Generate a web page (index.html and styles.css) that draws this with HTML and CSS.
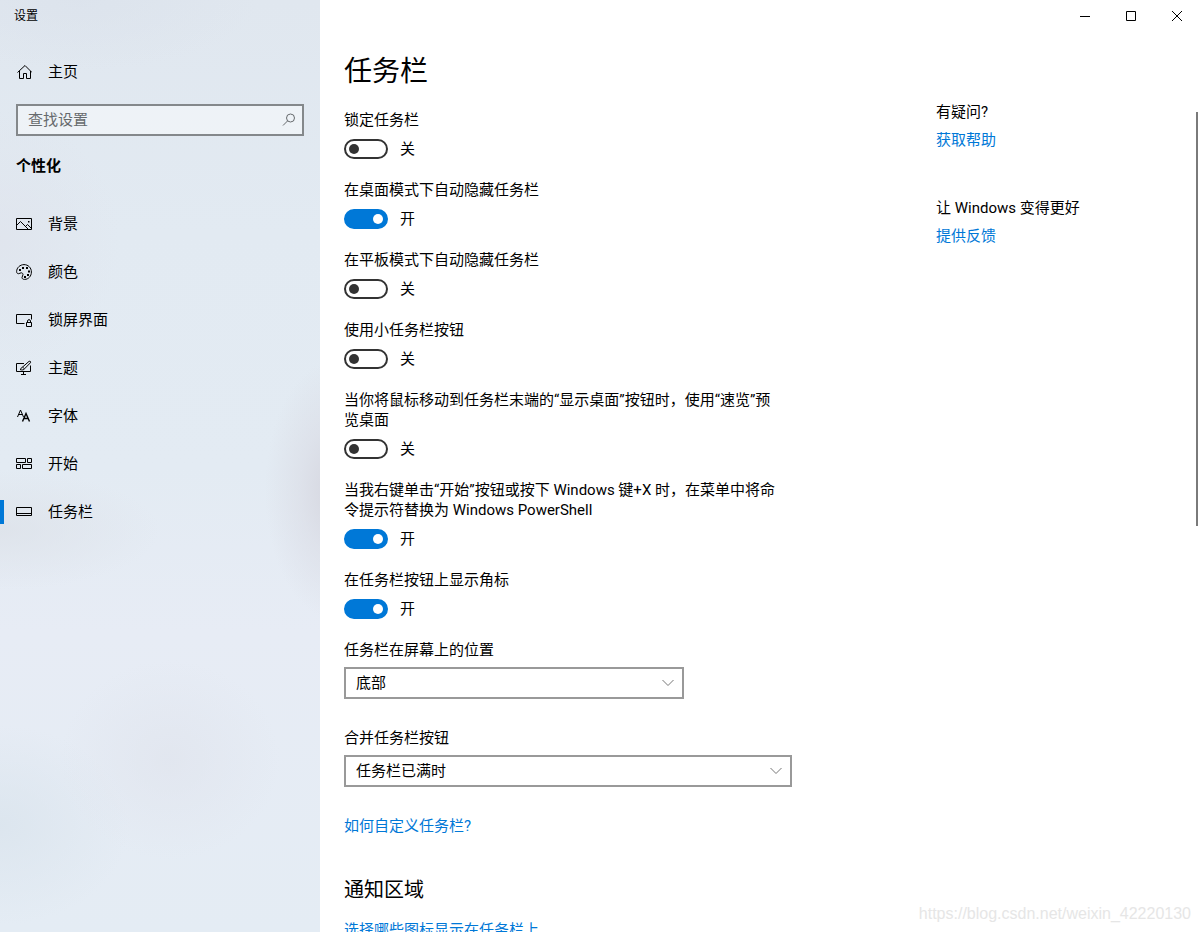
FILE: index.html
```html
<!DOCTYPE html>
<html lang="zh-CN">
<head>
<meta charset="utf-8">
<meta name="viewport" content="width=device-width, initial-scale=1">
<title>设置</title>
<link rel="stylesheet" href="styles.css">
</head>
<body>
<div class="window">
  <div class="sidebar">
    <div class="app-title">设置</div>
    <a class="nav-item home" href="#">
      <svg class="icon" viewBox="0 0 16 16"><path d="M1.500 8.500 9 1.500 16 8.500M3.500 7V14.500H7.500V9.500H10.500V14.500H14.500V7"/></svg>
      <span>主页</span>
    </a>
    <div class="search">
      <input class="search-input" type="text" placeholder="查找设置" aria-label="查找设置">
      <svg class="search-icon" viewBox="0 0 14 14"><circle cx="8.500" cy="5" r="4"/><path d="M5.700 7.800 1 12.500"/></svg>
    </div>
    <h2 class="group-title">个性化</h2>
    <nav class="nav">
      <a class="nav-item" href="#">
        <svg class="icon" viewBox="0 0 16 16"><path d="M.5 2.500H15.500V13.500H.5ZM.5 9.500 4.500 5.500 12 13M9.500 10.500 11.500 8.500 15.500 12.500"/><path class="solid" d="M12 5h1.500v1.500h-1.500z"/></svg>
        <span>背景</span>
      </a>
      <a class="nav-item" href="#">
        <svg class="icon" viewBox="0 0 16 16"><path d="M8 .6C12.200 .6 15.400 3.800 15.400 8C15.400 12.200 12.400 15.400 8.600 15.400C6.800 15.400 6 14.600 6 13.500C6 12.300 7 11.700 7 10.600C7 9.400 6.100 8.800 5.200 8.800C4.200 8.800 3.700 9.700 2.600 9.700C1.300 9.700 .6 8.900 .6 7.600C.6 3.800 4 .6 8 .6Z"/><path class="solid" d="M3 5h2v2H3zM6 3h2v2H6zM10 3h2v2h-2zM12 6.500h2v2h-2zM11 10h2v2h-2zM8 12h2v2H8z"/></svg>
        <span>颜色</span>
      </a>
      <a class="nav-item" href="#">
        <svg class="icon" viewBox="0 0 16 16"><path d="M8.500 11.500H.5V2.500H15.500V7.500M10.500 10.500H15.500V14.500H10.500ZM11.500 10.500V9C11.500 7.200 14.500 7.200 14.500 9V10.500"/></svg>
        <span>锁屏界面</span>
      </a>
      <a class="nav-item" href="#">
        <svg class="icon" viewBox="0 0 16 16"><path d="M8 3.500H.5V11.500H14.500V5.500M7.500 11.500V14M5 14.500H10M4 9.500C5.400 9.400 4.800 7.400 6.500 7.100L13 1.400C14.300 .8 15.100 1.700 14.400 2.800L8.500 8.800C8 10 6 10.300 4 9.500M6.500 7.100 8.500 8.800"/></svg>
        <span>主题</span>
      </a>
      <a class="nav-item" href="#">
        <svg class="icon" viewBox="0 0 16 16"><path d="M1.500 9 4.500 2 7.500 9M2.500 6.500H6.500"/><path class="heavy" d="M6.500 13.500 10 5.500 13.500 13.500M7.700 10.500H12.300"/></svg>
        <span>字体</span>
      </a>
      <a class="nav-item" href="#">
        <svg class="icon" viewBox="0 0 16 16"><path d="M.5 2.500H9.500V6.500H.5ZM11.500 2.500H15.500V6.500H11.500ZM.5 8.500H4.500V12.500H.5ZM6.500 8.500H15.500V12.500H6.500Z"/></svg>
        <span>开始</span>
      </a>
      <a class="nav-item current" href="#" aria-current="page">
        <svg class="icon" viewBox="0 0 16 16"><path d="M.5 3.500H15.500V11.500H.5ZM.5 9.500H15.500"/></svg>
        <span>任务栏</span>
      </a>
    </nav>
  </div>

  <div class="page">
    <div class="caption">
      <button class="caption-button" type="button" aria-label="最小化"><svg class="caption-icon" viewBox="0 0 10 10"><path d="M0 5.500H10"/></svg></button>
      <button class="caption-button" type="button" aria-label="最大化"><svg class="caption-icon" viewBox="0 0 10 10"><path d="M.5 .5H9.500V9.500H.5Z"/></svg></button>
      <button class="caption-button" type="button" aria-label="关闭"><svg class="caption-icon" viewBox="0 0 10 10"><path d="M0 0 10 10M10 0 0 10"/></svg></button>
    </div>
    <div class="content">
      <main class="settings">
        <h1 class="page-title">任务栏</h1>

        <div class="setting">
          <label for="lock">锁定任务栏</label>
          <div class="switch"><input class="toggle" id="lock" type="checkbox"><span>关</span></div>
        </div>
        <div class="setting">
          <label for="hide-desktop">在桌面模式下自动隐藏任务栏</label>
          <div class="switch"><input class="toggle" id="hide-desktop" type="checkbox" checked><span>开</span></div>
        </div>
        <div class="setting">
          <label for="hide-tablet">在平板模式下自动隐藏任务栏</label>
          <div class="switch"><input class="toggle" id="hide-tablet" type="checkbox"><span>关</span></div>
        </div>
        <div class="setting">
          <label for="small">使用小任务栏按钮</label>
          <div class="switch"><input class="toggle" id="small" type="checkbox"><span>关</span></div>
        </div>
        <div class="setting">
          <label for="peek">当你将鼠标移动到任务栏末端的“显示桌面”按钮时，使用“速览”预览桌面</label>
          <div class="switch"><input class="toggle" id="peek" type="checkbox"><span>关</span></div>
        </div>
        <div class="setting">
          <label for="powershell">当我右键单击“开始”按钮或按下 Windows 键+X 时，在菜单中将命令提示符替换为 Windows PowerShell</label>
          <div class="switch"><input class="toggle" id="powershell" type="checkbox" checked><span>开</span></div>
        </div>
        <div class="setting">
          <label for="badges">在任务栏按钮上显示角标</label>
          <div class="switch"><input class="toggle" id="badges" type="checkbox" checked><span>开</span></div>
        </div>

        <div class="choice">
          <label for="position">任务栏在屏幕上的位置</label>
          <div class="dropdown dropdown-short">
            <select class="select" id="position"><option>底部</option></select>
            <svg class="chevron" viewBox="0 0 12 8"><path d="M.5 1 6 6.500 11.500 1"/></svg>
          </div>
        </div>
        <div class="choice">
          <label for="combine">合并任务栏按钮</label>
          <div class="dropdown">
            <select class="select" id="combine"><option>任务栏已满时</option></select>
            <svg class="chevron" viewBox="0 0 12 8"><path d="M.5 1 6 6.500 11.500 1"/></svg>
          </div>
        </div>
        <a class="link" href="#">如何自定义任务栏?</a>

        <h2 class="section-title">通知区域</h2>
        <a class="link" href="#">选择哪些图标显示在任务栏上</a>
      </main>

      <aside class="help">
        <div class="help-group">
          <div>有疑问?</div>
          <a class="link" href="#">获取帮助</a>
        </div>
        <div class="help-group">
          <div>让 Windows 变得更好</div>
          <a class="link" href="#">提供反馈</a>
        </div>
      </aside>
    </div>
    <div class="scroll-thumb"></div>
    <div class="watermark">https://blog.csdn.net/weixin_42220130</div>
  </div>
</div>
</body>
</html>
```
FILE: styles.css
```css
* {
  box-sizing: border-box;
}

body {
  margin: 0;
  background: #fff;
  color: #000;
  font: 15px/20px Roboto, "Noto Sans CJK SC", sans-serif;
}

h1,
h2 {
  margin: 0;
  font-weight: 400;
}

a {
  color: inherit;
  text-decoration: none;
}

input,
select,
button {
  margin: 0;
  font: inherit;
}

.window {
  display: grid;
  grid-template-columns: 320px minmax(0, 1fr);
  height: 100vh;
  overflow: hidden;
}

/* Sidebar */
.sidebar {
  background:
    radial-gradient(70px 130px at 335px 490px, #d5d6df, rgba(218, 220, 229, 0.6) 50%, rgba(226, 232, 241, 0)),
    radial-gradient(160px 60px at 0 530px, rgba(221, 226, 233, 0.8), rgba(226, 232, 240, 0)),
    radial-gradient(110px 100px at 170px 760px, rgba(224, 228, 237, 0.7), rgba(229, 235, 244, 0)),
    radial-gradient(130px 100px at 0 825px, rgba(218, 228, 237, 0.8), rgba(229, 235, 244, 0)),
    radial-gradient(120px 130px at 0 240px, rgba(223, 227, 236, 0.7), rgba(226, 233, 241, 0)),
    radial-gradient(180px 70px at 80px 0, rgba(218, 225, 235, 0.6), rgba(223, 230, 238, 0)),
    linear-gradient(#e0e7ef, #e2eaf2 25%, #e3ebf3 50%, #e7ecf5 68%, #e4ecf4);
}

.app-title {
  padding: 6px 14px;
  font-size: 12px;
}

.nav-item {
  display: flex;
  align-items: center;
  gap: 16px;
  height: 48px;
  padding: 0 16px;
}

.home {
  margin-top: 16px;
}

.current {
  background: linear-gradient(#0078d7, #0078d7) left center / 4px 24px no-repeat;
}

.icon {
  width: 16px;
  height: 16px;
  flex: none;
  fill: none;
  stroke: #000;
}

.icon .solid {
  fill: #000;
  stroke: none;
}

.icon .heavy {
  stroke-width: 1.4;
}

.search {
  display: grid;
  align-items: center;
  margin: 8px 16px 0;
}

.search-input,
.search-icon {
  grid-area: 1 / 1;
}

.search-input {
  width: 100%;
  height: 32px;
  padding: 0 36px 0 10px;
  border: 2px solid #84888b;
  border-radius: 0;
  background: rgba(255, 255, 255, 0.45);
}

.search-input::placeholder {
  color: #666a6d;
  opacity: 1;
}

.search-icon {
  justify-self: end;
  width: 14px;
  height: 14px;
  margin-right: 8px;
  fill: none;
  stroke: #666a6d;
  pointer-events: none;
}

.group-title {
  margin: 20px 16px 24px;
  font-size: 15px;
  font-weight: 700;
}

/* Window buttons */
.page {
  position: relative;
  overflow: hidden;
}

.caption {
  display: flex;
  justify-content: flex-end;
}

.caption-button {
  display: grid;
  place-items: center;
  width: 46px;
  height: 32px;
  padding: 0;
  border: 0;
  background: none;
}

.caption-icon {
  width: 10px;
  height: 10px;
  fill: none;
  stroke: #000;
}

/* Page content */
.content {
  display: grid;
  grid-template-columns: minmax(0, 448px) minmax(0, 1fr);
  gap: 144px;
  padding: 22px 24px 0;
}

.page-title {
  margin-bottom: 20px;
  font-size: 28px;
  line-height: 36px;
}

.setting {
  display: grid;
  gap: 9px;
  margin-bottom: 21px;
}

.setting label {
  max-width: 440px;
}

.switch {
  display: flex;
  align-items: center;
  gap: 12px;
}

.toggle {
  display: flex;
  align-items: center;
  width: 44px;
  height: 20px;
  padding: 0 3px;
  appearance: none;
  border: 2px solid #333;
  border-radius: 10px;
}

.toggle::before {
  content: "";
  width: 10px;
  height: 10px;
  border-radius: 50%;
  background: #333;
}

.toggle:checked {
  justify-content: flex-end;
  border-color: #0078d7;
  background: #0078d7;
}

.toggle:checked::before {
  background: #fff;
}

.choice {
  display: grid;
  gap: 7px;
  margin-bottom: 29px;
}

.dropdown {
  display: grid;
  align-items: center;
}

.dropdown-short {
  max-width: 340px;
}

.select,
.chevron {
  grid-area: 1 / 1;
}

.select {
  width: 100%;
  height: 32px;
  padding: 0 32px 0 10px;
  appearance: none;
  border: 2px solid #999;
  border-radius: 0;
  background: #fff;
  color: #000;
}

.chevron {
  justify-self: end;
  width: 12px;
  height: 8px;
  margin-right: 10px;
  fill: none;
  stroke: #777;
  pointer-events: none;
}

.link {
  color: #0078d7;
}

.section-title {
  margin: 40px 0 16px;
  font-size: 20px;
  line-height: 28px;
}

.help {
  display: grid;
  align-content: start;
  gap: 48px;
  padding-top: 48px;
}

.help-group {
  display: grid;
  gap: 8px;
}

.scroll-thumb {
  position: absolute;
  top: 112px;
  right: 2px;
  width: 2px;
  height: 414px;
  background: #7a7a7a;
}

.watermark {
  position: absolute;
  right: 9px;
  bottom: 8px;
  color: #e6e6e6;
  font: 16px/20px "Liberation Sans", Arial, sans-serif;
}
```
